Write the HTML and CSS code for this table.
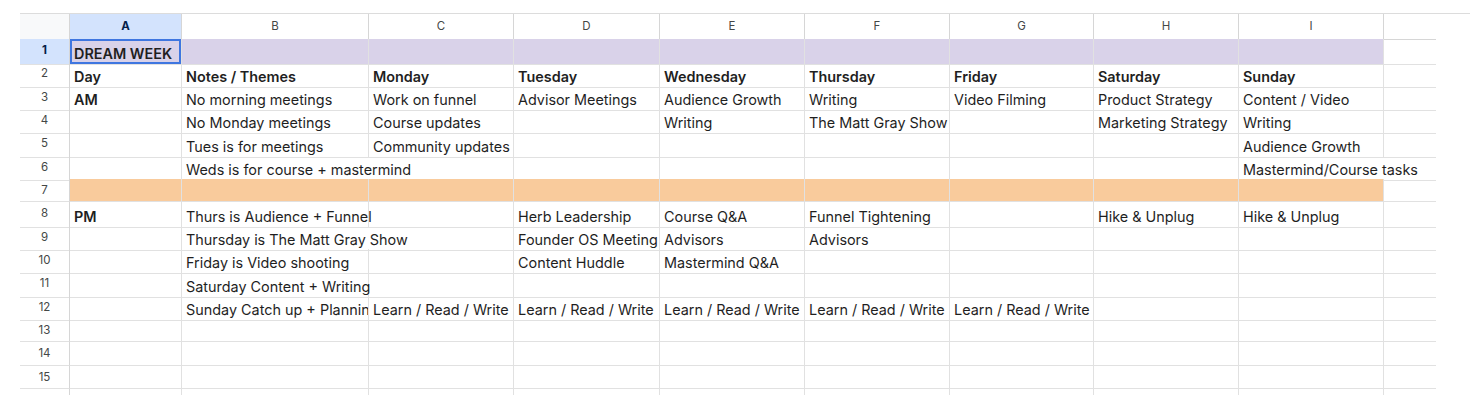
FILE: index.html
```html
<!DOCTYPE html>
<html>
<head>
<meta charset="utf-8">
<link rel="stylesheet" href="styles.css">
</head>
<body>
<div class="sheet">
  <div class="row head">
    <div class="corner"></div>
    <div class="ch sel">A</div><div class="ch">B</div><div class="ch">C</div><div class="ch">D</div><div class="ch">E</div><div class="ch">F</div><div class="ch">G</div><div class="ch">H</div><div class="ch">I</div><div class="ch last"></div>
  </div>
  <div class="row purple">
    <div class="rh sel">1</div>
    <div class="c b active">DREAM WEEK</div><div class="c"></div><div class="c"></div><div class="c"></div><div class="c"></div><div class="c"></div><div class="c"></div><div class="c"></div><div class="c"></div><div class="c last"></div>
  </div>
  <div class="row">
    <div class="rh">2</div>
    <div class="c b">Day</div><div class="c b">Notes / Themes</div><div class="c b">Monday</div><div class="c b">Tuesday</div><div class="c b">Wednesday</div><div class="c b">Thursday</div><div class="c b">Friday</div><div class="c b">Saturday</div><div class="c b">Sunday</div><div class="c last"></div>
  </div>
  <div class="row">
    <div class="rh">3</div>
    <div class="c b">AM</div><div class="c">No morning meetings</div><div class="c">Work on funnel</div><div class="c">Advisor Meetings</div><div class="c">Audience Growth</div><div class="c">Writing</div><div class="c">Video Filming</div><div class="c">Product Strategy</div><div class="c">Content / Video</div><div class="c last"></div>
  </div>
  <div class="row">
    <div class="rh">4</div>
    <div class="c"></div><div class="c">No Monday meetings</div><div class="c">Course updates</div><div class="c"></div><div class="c">Writing</div><div class="c">The Matt Gray Show</div><div class="c"></div><div class="c">Marketing Strategy</div><div class="c">Writing</div><div class="c last"></div>
  </div>
  <div class="row">
    <div class="rh">5</div>
    <div class="c"></div><div class="c">Tues is for meetings</div><div class="c">Community updates</div><div class="c"></div><div class="c"></div><div class="c"></div><div class="c"></div><div class="c"></div><div class="c">Audience Growth</div><div class="c last"></div>
  </div>
  <div class="row">
    <div class="rh">6</div>
    <div class="c"></div><div class="c spill">Weds is for course + mastermind</div><div class="c"></div><div class="c"></div><div class="c"></div><div class="c"></div><div class="c"></div><div class="c"></div><div class="c spill">Mastermind/Course tasks</div><div class="c last"></div>
  </div>
  <div class="row orange">
    <div class="rh">7</div>
    <div class="c"></div><div class="c"></div><div class="c"></div><div class="c"></div><div class="c"></div><div class="c"></div><div class="c"></div><div class="c"></div><div class="c"></div><div class="c last"></div>
  </div>
  <div class="row">
    <div class="rh">8</div>
    <div class="c b">PM</div><div class="c">Thurs is Audience + Funnel</div><div class="c"></div><div class="c">Herb Leadership</div><div class="c">Course Q&amp;A</div><div class="c">Funnel Tightening</div><div class="c"></div><div class="c">Hike &amp; Unplug</div><div class="c">Hike &amp; Unplug</div><div class="c last"></div>
  </div>
  <div class="row">
    <div class="rh">9</div>
    <div class="c"></div><div class="c spill">Thursday is The Matt Gray Show</div><div class="c"></div><div class="c">Founder OS Meeting</div><div class="c">Advisors</div><div class="c">Advisors</div><div class="c"></div><div class="c"></div><div class="c"></div><div class="c last"></div>
  </div>
  <div class="row">
    <div class="rh">10</div>
    <div class="c"></div><div class="c">Friday is Video shooting</div><div class="c"></div><div class="c">Content Huddle</div><div class="c">Mastermind Q&amp;A</div><div class="c"></div><div class="c"></div><div class="c"></div><div class="c"></div><div class="c last"></div>
  </div>
  <div class="row">
    <div class="rh">11</div>
    <div class="c"></div><div class="c">Saturday Content + Writing</div><div class="c"></div><div class="c"></div><div class="c"></div><div class="c"></div><div class="c"></div><div class="c"></div><div class="c"></div><div class="c last"></div>
  </div>
  <div class="row">
    <div class="rh">12</div>
    <div class="c"></div><div class="c clip">Sunday Catch up + Planning</div><div class="c">Learn / Read / Write</div><div class="c">Learn / Read / Write</div><div class="c">Learn / Read / Write</div><div class="c">Learn / Read / Write</div><div class="c">Learn / Read / Write</div><div class="c"></div><div class="c"></div><div class="c last"></div>
  </div>
  <div class="row">
    <div class="rh">13</div>
    <div class="c"></div><div class="c"></div><div class="c"></div><div class="c"></div><div class="c"></div><div class="c"></div><div class="c"></div><div class="c"></div><div class="c"></div><div class="c last"></div>
  </div>
  <div class="row">
    <div class="rh">14</div>
    <div class="c"></div><div class="c"></div><div class="c"></div><div class="c"></div><div class="c"></div><div class="c"></div><div class="c"></div><div class="c"></div><div class="c"></div><div class="c last"></div>
  </div>
  <div class="row">
    <div class="rh">15</div>
    <div class="c"></div><div class="c"></div><div class="c"></div><div class="c"></div><div class="c"></div><div class="c"></div><div class="c"></div><div class="c"></div><div class="c"></div><div class="c last"></div>
  </div>
  <div class="row stub">
    <div class="rh"></div>
    <div class="c"></div><div class="c"></div><div class="c"></div><div class="c"></div><div class="c"></div><div class="c"></div><div class="c"></div><div class="c"></div><div class="c"></div><div class="c last"></div>
  </div>
</div>
</body>
</html>
```
FILE: styles.css
```css
* { box-sizing: border-box; }
html, body { margin: 0; background: #ffffff; }
body {
  font-family: Inter, "Noto Sans", sans-serif;
  color: #1f1f1f;
}
.sheet {
  padding: 13px 0 0 20px;
}
.row {
  display: grid;
  grid-template-columns: 50px 112px 187px 145px 146px 145px 145px 144px 145px 145px 52px;
  height: 23.33px;
}
.row.head {
  height: 26px;
  border-top: 1px solid #dcdcdc;
}
.row.stub { height: 6px; }
.row.stub .c, .row.stub .rh { border-bottom: none; }

.corner {
  background: #f8f9fa;
  border-right: 1px solid #d6d6d6;
  border-bottom: 1px solid #d6d6d6;
}
.ch {
  border-right: 1px solid #d6d6d6;
  border-bottom: 1px solid #d6d6d6;
  font-size: 11.5px;
  color: #444746;
  text-align: center;
  line-height: 25px;
}
.ch.sel {
  background: #d3e3fd;
  color: #041e49;
  font-weight: 700;
}
.ch.last { border-right: none; }

.rh {
  border-right: 1px solid #d6d6d6;
  border-bottom: 1px solid #e1e1e1;
  font-size: 11.5px;
  color: #444746;
  text-align: center;
  line-height: 22px;
}
.rh.sel {
  background: #d3e3fd;
  color: #041e49;
  font-weight: 700;
}

.c {
  border-right: 1px solid #e1e1e1;
  border-bottom: 1px solid #e1e1e1;
  font-size: 14.4px;
  line-height: 21px;
  padding: 3.5px 3px 0 4px;
  white-space: nowrap;
  color: #1f1f1f;
}
.c.last { border-right: none; }
.c.b { font-weight: 600; }
.c.spill { border-right-color: transparent; }
.c.clip { overflow: hidden; padding-right: 0; }
.c.active { box-shadow: inset 0 0 0 2px #3f76e0; }

.purple .c:not(.last) { background: #d9d2e9; }
.orange .c:not(.last) { background: #f9cb9c; }
```
